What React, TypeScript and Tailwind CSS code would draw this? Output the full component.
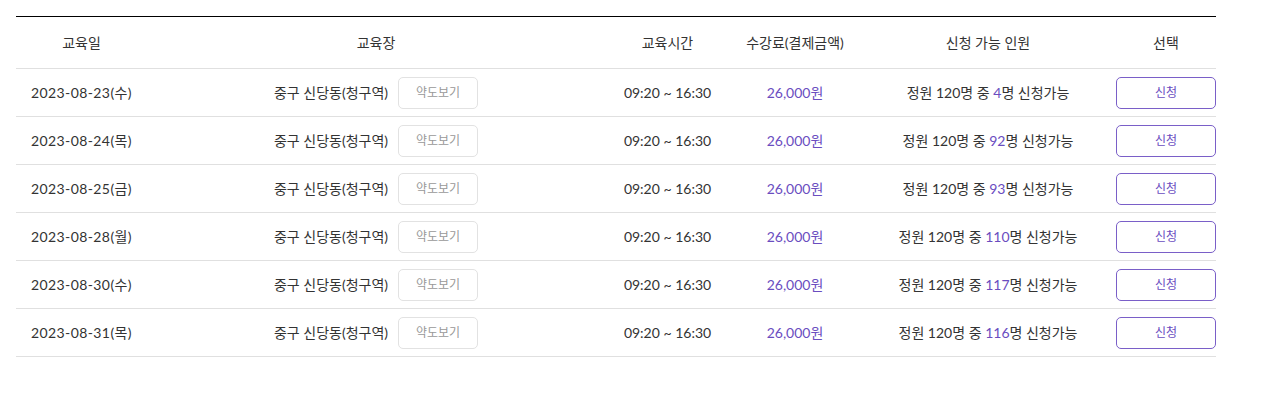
const rows = [
  { date: '2023-08-23(수)', left: 4 },
  { date: '2023-08-24(목)', left: 92 },
  { date: '2023-08-25(금)', left: 93 },
  { date: '2023-08-28(월)', left: 110 },
  { date: '2023-08-30(수)', left: 117 },
  { date: '2023-08-31(목)', left: 116 },
];

export default function App() {
  return (
    <div className="bg-white w-[1273px] h-[404px] pl-[16px] pt-[16px] text-[#333] text-[14px] font-[Lato,Noto_Sans_CJK_KR,sans-serif]">
      <table className="w-[1200px] table-fixed border-collapse border-t border-t-black">
        <colgroup>
          <col className="w-[131px]" />
          <col className="w-[458px]" />
          <col className="w-[125px]" />
          <col className="w-[130px]" />
          <col className="w-[256px]" />
          <col className="w-[100px]" />
        </colgroup>
        <thead>
          <tr className="h-[52px] border-b border-[#e0e0e0]">
            <th className="font-normal text-center">교육일</th>
            <th className="font-normal text-center">교육장</th>
            <th className="font-normal text-center">교육시간</th>
            <th className="font-normal text-center">수강료(결제금액)</th>
            <th className="font-normal text-center">신청 가능 인원</th>
            <th className="font-normal text-center">선택</th>
          </tr>
        </thead>
        <tbody>
          {rows.map((r) => (
            <tr key={r.date} className="h-[48px] border-b border-[#e0e0e0]">
              <td className="text-center tracking-[0.4px]">{r.date}</td>
              <td>
                <div className="flex items-center justify-center gap-[10px]">
                  <span>중구 신당동(청구역)</span>
                  <button className="w-[80px] h-[32px] border border-[#e2e2e2] rounded-[5px] text-[12px] text-[#999] bg-white">
                    약도보기
                  </button>
                </div>
              </td>
              <td className="text-center">09:20 ~ 16:30</td>
              <td className="text-center text-[#6a4dbf]">26,000원</td>
              <td className="text-center">
                정원 120명 중 <span className="text-[#6a4dbf]">{r.left}</span>명 신청가능
              </td>
              <td>
                <div className="flex items-center justify-end">
                  <button className="w-[100px] h-[32px] border border-[#7a5fc8] rounded-[5px] text-[12px] text-[#6a4dbf] bg-white">
                    신청
                  </button>
                </div>
              </td>
            </tr>
          ))}
        </tbody>
      </table>
    </div>
  );
}
